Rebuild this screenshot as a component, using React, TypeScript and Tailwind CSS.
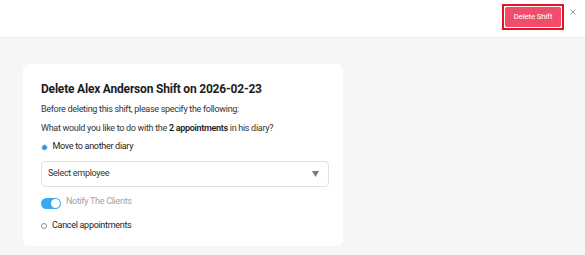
import React from "react";

export default function App() {
  return (
    <div className="w-[585px] h-[255px] bg-[#f5f6f8] overflow-hidden" style={{ fontFamily: "Roboto, Lato, sans-serif" }}>
      <div className="h-[38px] bg-white border-b border-[#ebecef] flex items-start justify-end pr-[9px] pt-[4px]">
        <div className="border-2 border-[#e5141e] p-[1px] w-[62px] h-[26px]">
          <button className="bg-[#f24c6c] text-white text-[8px] tracking-[-0.2px] w-full h-full rounded-[2px] flex items-center justify-center whitespace-nowrap">Delete Shift</button>
        </div>
        <svg className="ml-[6px] mt-[5px]" width="6" height="6" viewBox="0 0 6 6"><path d="M0.5 0.5l5 5M5.5 0.5l-5 5" stroke="#9a9a9a" strokeWidth="1" /></svg>
      </div>
      <div className="ml-[23px] mt-[26px] w-[320px] h-[182px] bg-white rounded-[6px] pl-[18px] pr-[14px] pt-[16px]">
        <div className="text-[12px] font-bold text-[#1c1c1c] leading-[18px] whitespace-nowrap tracking-[-0.2px]">Delete Alex Anderson Shift on 2026-02-23</div>
        <div className="text-[9px] text-[#333] mt-[4px] leading-[14px] whitespace-nowrap tracking-[-0.3px]">Before deleting this shift, please specify the following:</div>
        <div className="text-[9px] text-[#333] mt-[5px] leading-[14px] whitespace-nowrap tracking-[-0.3px]">What would you like to do with the <b className="text-[#1c1c1c] font-semibold">2 appointments</b> in his diary?</div>
        <div className="flex items-center mt-[5px] h-[14px]">
          <span className="w-[5px] h-[5px] rounded-full bg-[#2f8de4] ml-[0.5px] outline outline-1 outline-[#cfe3f7] outline-offset-[0px]"></span>
          <span className="text-[9px] text-[#1c1c1c] ml-[6px] tracking-[-0.3px]">Move to another diary</span>
        </div>
        <div className="mt-[7px] w-[288px] h-[26px] border border-[#e1e1e1] rounded-[4px] flex items-center justify-between pl-[6px] pr-[9px]">
          <span className="text-[9px] text-[#333] tracking-[-0.3px]">Select employee</span>
          <svg width="7" height="6" viewBox="0 0 7 6"><path d="M0 0h7L3.5 6z" fill="#7a7a7a" /></svg>
        </div>
        <div className="flex items-center mt-[9px] h-[14px]">
          <div className="w-[20px] h-[11px] rounded-full bg-[#37aaf2] relative">
            <span className="absolute right-[1px] top-[1px] w-[9px] h-[9px] bg-white rounded-full"></span>
          </div>
          <span className="text-[9px] text-[#a3a3a3] ml-[5px] mt-[-2px] tracking-[-0.3px]">Notify The Clients</span>
        </div>
        <div className="flex items-center mt-[9px] h-[14px]">
          <span className="w-[6px] h-[6px] rounded-full border border-[#8a8a8a] ml-[0px]"></span>
          <span className="text-[9px] text-[#1c1c1c] ml-[5px] tracking-[-0.3px]">Cancel appointments</span>
        </div>
      </div>
    </div>
  );
}
